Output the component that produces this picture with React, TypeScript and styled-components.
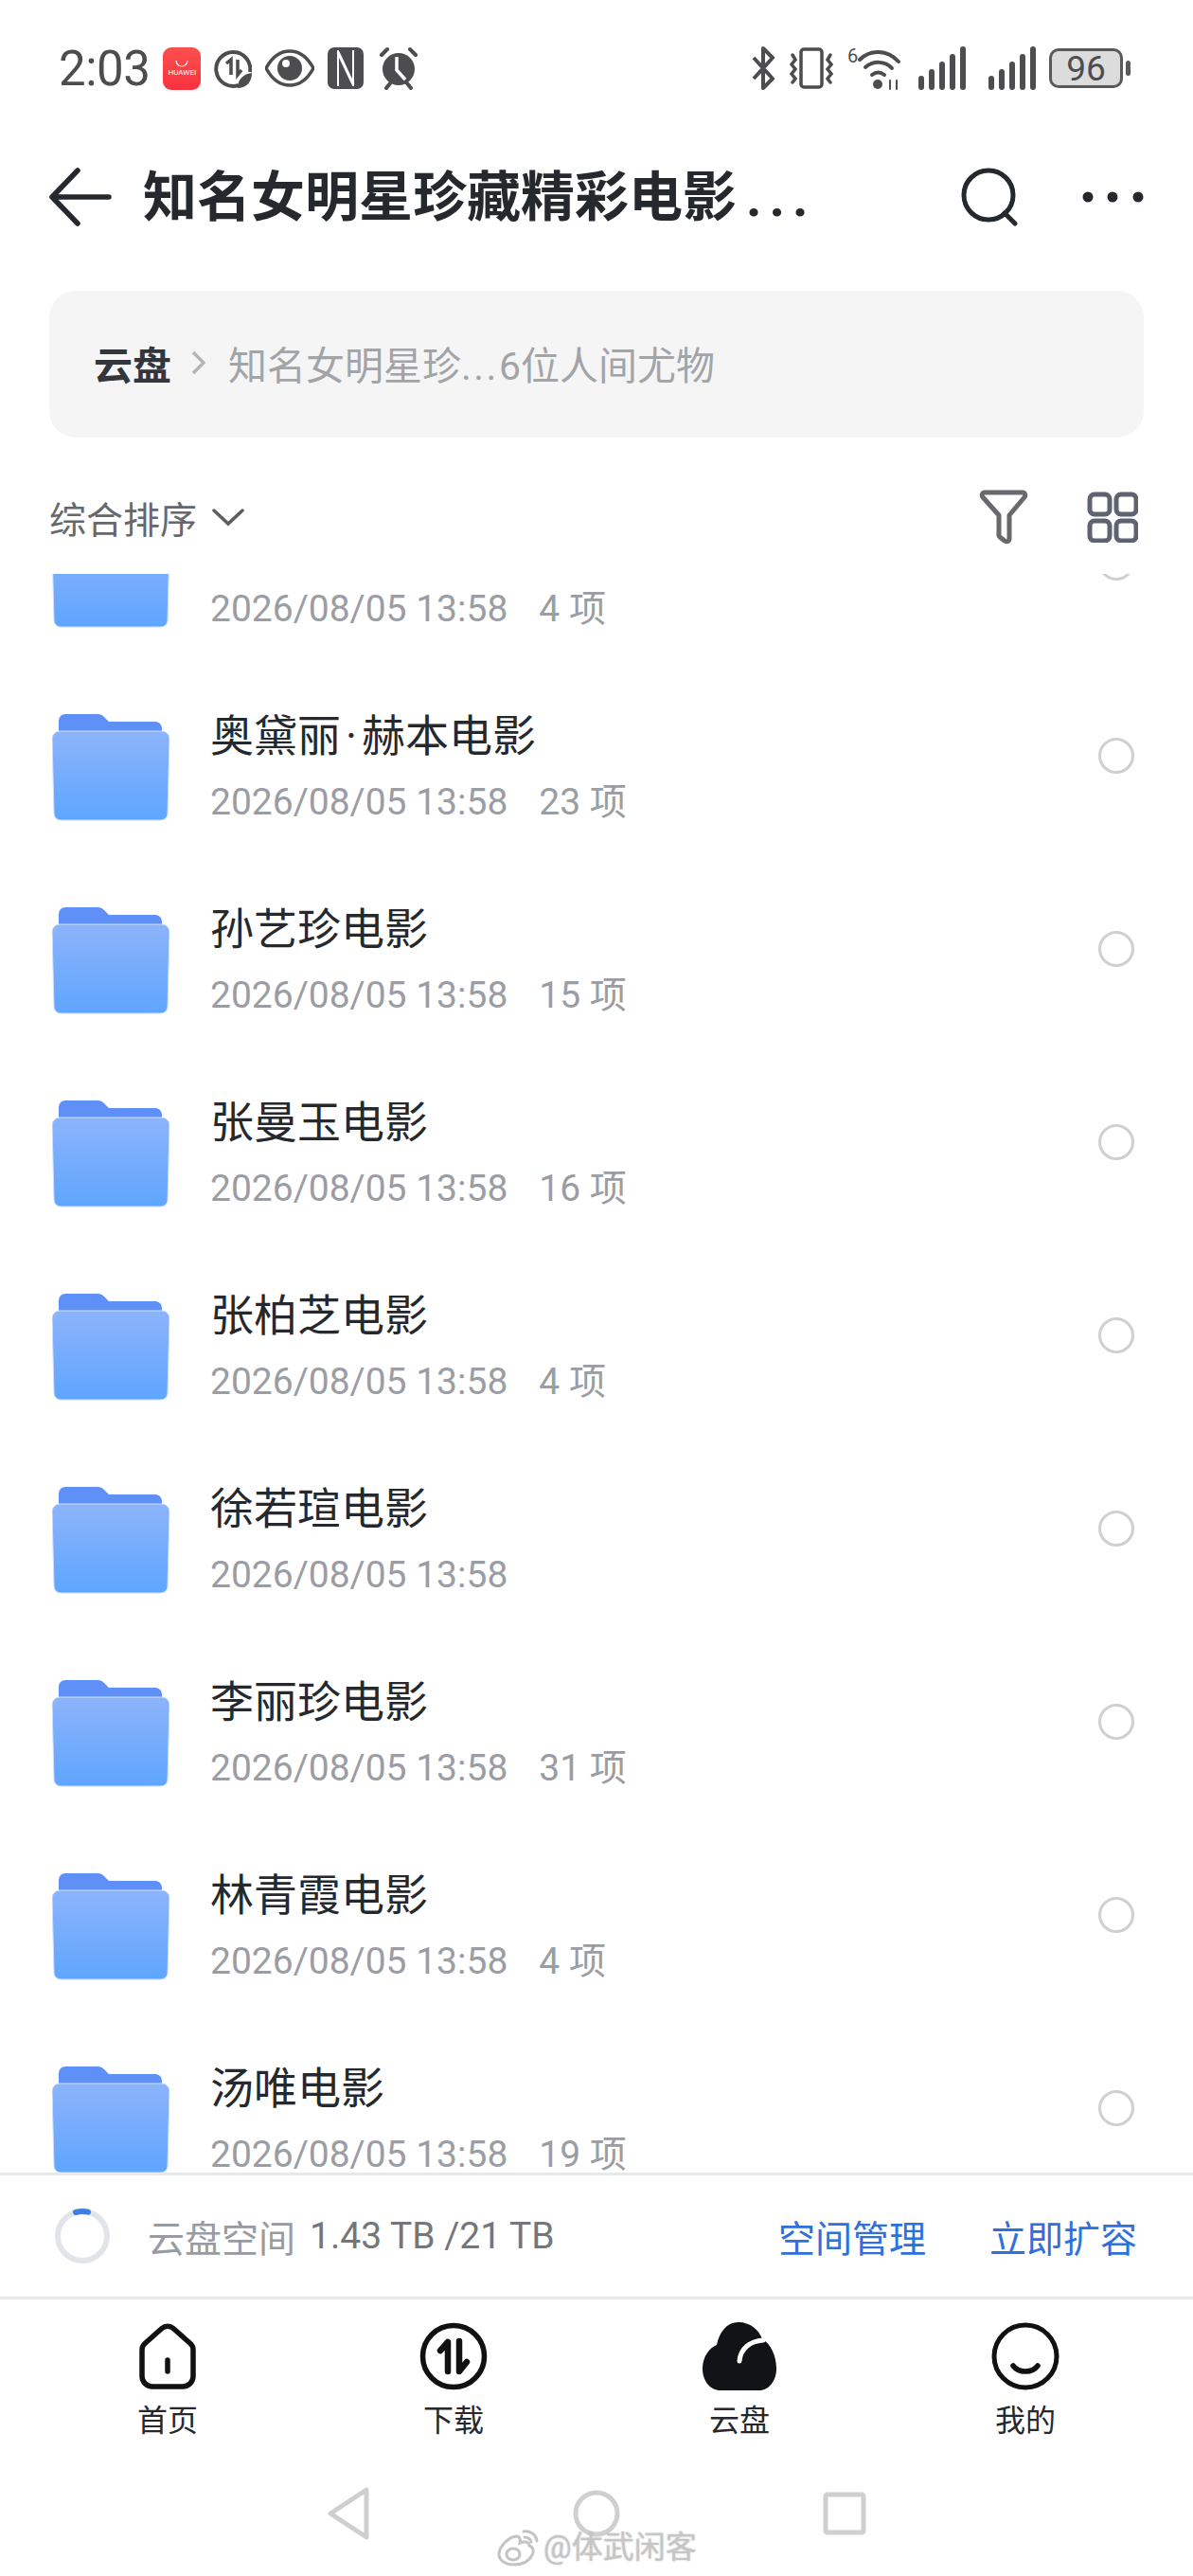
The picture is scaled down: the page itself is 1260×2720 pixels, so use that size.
import * as React from 'react';
import styled, { createGlobalStyle } from 'styled-components';

const GlobalStyle = createGlobalStyle`
  html, body {
    margin: 0;
    padding: 0;
    background: #fff;
  }
  * {
    box-sizing: border-box;
  }
`;

const Page = styled.div`
  position: relative;
  display: flex;
  flex-direction: column;
  width: 1260px;
  height: 2720px;
  overflow: hidden;
  background: #fff;
  font-family: Roboto, "Noto Sans CJK SC", sans-serif;
  color: #25282d;
`;

const StatusBar = styled.div`
  display: flex;
  align-items: center;
  justify-content: space-between;
  height: 144px;
  padding: 0 66px 0 62px;
  flex-shrink: 0;
  color: #4d4d4f;
`;

const StatusGroup = styled.div<{ $gap: number }>`
  display: flex;
  align-items: center;
  gap: ${(p) => p.$gap}px;
`;

const Clock = styled.span`
  font-size: 51px;
  line-height: 1;
  letter-spacing: -0.5px;
`;

const StoreTile = styled.div`
  display: flex;
  flex-direction: column;
  align-items: center;
  justify-content: center;
  width: 40px;
  height: 45px;
  border-radius: 9px;
  background: linear-gradient(#fb4f4f, #f9323e);
  color: #fff;
  font-size: 8px;
  line-height: 1;
`;

const BatteryBox = styled.div`
  display: flex;
  align-items: center;
  justify-content: center;
  width: 78px;
  height: 42px;
  border: 3px solid #5a5a5c;
  border-radius: 10px;
  background: #dcdcdc;
  font-size: 37px;
  line-height: 1;
  color: #4d4d4f;
`;

const BatteryNub = styled.div`
  width: 5px;
  height: 16px;
  margin-left: 3px;
  border-radius: 3px;
  background: #5a5a5c;
`;

const Battery = styled.div`
  display: flex;
  align-items: center;
`;

const Header = styled.div`
  display: flex;
  align-items: center;
  height: 128px;
  padding: 0 52px;
  flex-shrink: 0;
`;

const Title = styled.h1`
  flex: 1;
  margin: 2px 0 0 33px;
  font-size: 57px;
  line-height: 1.2;
  font-weight: 700;
  white-space: nowrap;
  color: #25282d;
`;

const TitleDots = styled.span`
  margin-left: 10px;
  letter-spacing: 8px;
`;

const HeaderActions = styled.div`
  display: flex;
  align-items: center;
  gap: 67px;
`;

const Crumbs = styled.div`
  display: flex;
  align-items: center;
  height: 155px;
  margin: 35px 52px 0;
  padding: 0 47px 4px;
  flex-shrink: 0;
  border-radius: 28px;
  background: #f5f5f5;
`;

const CrumbRoot = styled.span`
  font-weight: 700;
  font-size: 41px;
  color: #33363b;
`;

const CrumbCurrent = styled.span`
  color: #a2a4a8;
  font-size: 41px;
`;

const CrumbDots = styled.span`
  letter-spacing: 2.5px;
`;

const SortRow = styled.div`
  display: flex;
  align-items: center;
  justify-content: space-between;
  height: 144px;
  padding: 24px 52px 0;
  flex-shrink: 0;
`;

const SortLabel = styled.div`
  display: flex;
  align-items: center;
  gap: 16px;
  font-size: 39px;
  color: #66686c;
`;

const ViewTools = styled.div`
  display: flex;
  align-items: center;
  gap: 62px;
  margin-right: 6px;
`;

const List = styled.div`
  flex: 1;
  min-height: 0;
  overflow: hidden;
`;

const Scroller = styled.div`
  margin-top: -112px;
`;

const Row = styled.div`
  display: flex;
  align-items: center;
  height: 204px;
  padding: 0 62px 0 55px;
`;

const FolderIcon = styled.svg`
  margin-top: 20px;
`;

const RowText = styled.div`
  flex: 1;
  margin: 18px 0 0 43px;
`;

const RowName = styled.div`
  font-size: 46px;
  line-height: 60px;
  color: #25282d;
`;

const NameDot = styled.span`
  margin: 0 5px;
`;

const RowMeta = styled.div`
  display: flex;
  gap: 33px;
  margin-top: 16px;
  font-size: 39px;
  line-height: 48px;
  color: #9b9da4;
`;

const Radio = styled.div`
  width: 38px;
  height: 38px;
  margin-bottom: 5px;
  border: 3px solid #cfd0d4;
  border-radius: 50%;
`;

const Storage = styled.div`
  display: flex;
  align-items: center;
  height: 134px;
  padding: 0 59px 0 58px;
  flex-shrink: 0;
  border-top: 3px solid #e6e8ea;
  border-bottom: 3px solid #e6e8ea;
  font-size: 39px;
`;

const StorageLabel = styled.span`
  margin-left: 40px;
  color: #989ba1;
`;

const StorageValue = styled.span`
  flex: 1;
  margin-left: 15px;
  color: #74767a;
`;

const StorageLink = styled.span`
  margin-left: 67px;
  color: #2f70dc;
`;

const Tabs = styled.div`
  display: grid;
  grid-template-columns: repeat(4, 302px);
  height: 172px;
  padding: 24px 26px 0;
  flex-shrink: 0;
`;

const Tab = styled.div`
  display: flex;
  flex-direction: column;
  align-items: center;
  gap: 11px;
  font-size: 32px;
  line-height: 42px;
  color: #26282c;
`;

const NavBar = styled.div`
  display: flex;
  align-items: center;
  justify-content: center;
  gap: 214px;
  height: 120px;
  padding: 0 1px 12px 0;
  flex-shrink: 0;
`;

const Watermark = styled.div`
  position: absolute;
  left: 525px;
  top: 2666px;
  display: flex;
  align-items: center;
  gap: 5px;
  font-size: 33px;
  line-height: 48px;
  color: #c6c6c6;
  text-shadow: 0 0 2px rgba(120, 120, 120, 0.45);
`;

const Folder = () => (
  <FolderIcon width="124" height="114" viewBox="0 0 124 114">
    <defs>
      <linearGradient id="folderFront" x1="0" y1="0" x2="0" y2="1">
        <stop offset="0" stopColor="#8cb4fb" />
        <stop offset="1" stopColor="#5fa5ff" />
      </linearGradient>
    </defs>
    <path d="M7 19V8a7 7 0 0 1 7-7h34c3 0 5 1 7 3l5 5h49a7 7 0 0 1 7 7v3z" fill="#5e90f8" />
    <path d="M8 19h108a8 8 0 0 1 8 8l-2 79a7 7 0 0 1-7 7H9a7 7 0 0 1-7-7L0 27a8 8 0 0 1 8-8z" fill="url(#folderFront)" stroke="#cfe0ff" strokeWidth="1" />
  </FolderIcon>
);

const files = [
  { name: '', date: '2026/08/05 13:58', count: '4 项' },
  { name: '奥黛丽|赫本电影', date: '2026/08/05 13:58', count: '23 项' },
  { name: '孙艺珍电影', date: '2026/08/05 13:58', count: '15 项' },
  { name: '张曼玉电影', date: '2026/08/05 13:58', count: '16 项' },
  { name: '张柏芝电影', date: '2026/08/05 13:58', count: '4 项' },
  { name: '徐若瑄电影', date: '2026/08/05 13:58', count: '' },
  { name: '李丽珍电影', date: '2026/08/05 13:58', count: '31 项' },
  { name: '林青霞电影', date: '2026/08/05 13:58', count: '4 项' },
  { name: '汤唯电影', date: '2026/08/05 13:58', count: '19 项' },
];

const renderName = (name: string) => {
  if (!name) return '\u00a0';
  const parts = name.split('|');
  if (parts.length === 1) return name;
  return (
    <>
      {parts[0]}
      <NameDot>·</NameDot>
      {parts[1]}
    </>
  );
};

const tabs = [
  {
    label: '首页',
    icon: (
      <svg width="72" height="72" viewBox="0 0 72 72" fill="none" stroke="#111" strokeWidth="5.5">
        <path d="M30 6.500a9 9 0 0 1 12 0l18 16a9 9 0 0 1 3 7V57a11 11 0 0 1-11 11H20A11 11 0 0 1 9 57V29.500a9 9 0 0 1 3-7z" />
        <path d="M36 40v12" strokeLinecap="round" />
      </svg>
    ),
  },
  {
    label: '下载',
    icon: (
      <svg width="72" height="72" viewBox="0 0 72 72" fill="none" stroke="#111" strokeWidth="5.5">
        <circle cx="36" cy="36" r="32.500" />
        <path d="M22 30l8-9v31" strokeWidth="6.500" strokeLinecap="round" strokeLinejoin="round" />
        <path d="M42 20v32l8-10" strokeWidth="6.500" strokeLinecap="round" strokeLinejoin="round" />
      </svg>
    ),
  },
  {
    label: '云盘',
    icon: (
      <svg width="78" height="72" viewBox="0 0 78 72">
        <path d="M19 72C8 72 0 62 0 49 0 37 7 27 15 24 18 9 27 0 38 0c12 0 22 8 25 18 9 4 15 18 15 31 0 13-8 23-18 23z" fill="#121316" />
        <path d="M39 41c1-13 11-21 25-22" fill="none" stroke="#fff" strokeWidth="5" strokeLinecap="round" />
      </svg>
    ),
  },
  {
    label: '我的',
    icon: (
      <svg width="72" height="72" viewBox="0 0 72 72" fill="none" stroke="#111" strokeWidth="5">
        <circle cx="36" cy="36" r="33" />
        <path d="M23 46c6 8 20 8 26 0" strokeWidth="5.500" strokeLinecap="round" />
      </svg>
    ),
  },
];

const App = () => (
  <Page>
    <GlobalStyle />
    <StatusBar>
      <StatusGroup $gap={14}>
        <Clock>2:03</Clock>
        <StoreTile>
          <svg width="16" height="10" viewBox="0 0 16 10" fill="none" stroke="#fff" strokeWidth="1.200">
            <path d="M2 1c1 8 11 8 12 0" />
          </svg>
          <span>HUAWEI</span>
        </StoreTile>
        <svg width="40" height="46" viewBox="0 0 40 46" fill="none" stroke="#4d4d4f" strokeWidth="4">
          <path d="M26 41a18 18 0 1 1 12-14" />
          <path d="M13 18l5-4v16M25 14v16l4-5" strokeWidth="3.500" />
          <path d="M25 44c0-9 6-15 15-16 0 10-6 16-15 16z" fill="#4d4d4f" stroke="none" />
        </svg>
        <svg width="52" height="40" viewBox="0 0 52 40">
          <path d="M1 20C8 7 17 2 26 2s18 5 25 18c-7 13-16 18-25 18S8 33 1 20z" fill="none" stroke="#4d4d4f" strokeWidth="3.500" />
          <circle cx="26" cy="20" r="13" fill="#4d4d4f" />
          <circle cx="22" cy="15" r="4" fill="#fff" />
        </svg>
        <svg width="38" height="44" viewBox="0 0 38 44">
          <rect width="38" height="44" rx="7" fill="#4d4d4f" />
          <path d="M11 3v38M27 3v38" stroke="#fff" strokeWidth="2" />
          <path d="M11 5l16 34" stroke="#fff" strokeWidth="3" />
        </svg>
        <svg width="42" height="46" viewBox="0 0 42 46" style={{ marginLeft: 2 }}>
          <circle cx="21" cy="24" r="17" fill="#4d4d4f" />
          <path d="M19 11v14l9 10" fill="none" stroke="#fff" strokeWidth="3.500" />
          <path d="M3 9l6-6M39 9l-6-6M8 44l4-5M34 44l-4-5" stroke="#4d4d4f" strokeWidth="4" strokeLinecap="round" />
        </svg>
      </StatusGroup>
      <StatusGroup $gap={14}>
        <svg width="26" height="46" viewBox="0 0 26 46" fill="none" stroke="#4d4d4f" strokeWidth="4" strokeLinejoin="round">
          <path d="M3 12l20 22-10 10V2l10 10L3 34" />
        </svg>
        <svg width="48" height="44" viewBox="0 0 48 44" fill="none" stroke="#4d4d4f" strokeWidth="3.500">
          <rect x="13" y="2" width="22" height="40" rx="3" />
          <path d="M4 8l3 5-4 5 4 5-4 5 4 5-3 4M44 8l-3 5 4 5-4 5 4 5-4 5 3 4" strokeLinecap="round" />
        </svg>
        <svg width="56" height="46" viewBox="0 0 56 46" fill="none" stroke="#4d4d4f" strokeWidth="4" strokeLinecap="round" style={{ overflow: 'visible' }}>
          <text x="0" y="17" fontSize="20" fill="#4d4d4f" stroke="none">6</text>
          <path d="M13 14c11-11 29-11 41 2M19 22c8-7 21-7 28 1M26 30c4-3 9-3 13 0" />
          <circle cx="32" cy="40" r="5" fill="#4d4d4f" stroke="none" />
          <path d="M45 36v9M52 36v9" strokeWidth="2" />
        </svg>
        <svg width="50" height="46" viewBox="0 0 50 46" stroke="#4d4d4f" strokeWidth="6" strokeLinecap="round" style={{ marginLeft: 5 }}>
          <path d="M3 34v9M14 27v16M25 19v24M36 11v32M47 3v40" />
        </svg>
        <svg width="50" height="46" viewBox="0 0 50 46" stroke="#4d4d4f" strokeWidth="6" strokeLinecap="round" style={{ marginLeft: 10 }}>
          <path d="M3 34v9M14 27v16M25 19v24M36 11v32M47 3v40" />
        </svg>
        <Battery>
          <BatteryBox>96</BatteryBox>
          <BatteryNub />
        </Battery>
      </StatusGroup>
    </StatusBar>

    <Header>
      <svg width="66" height="62" viewBox="0 0 66 62" fill="none" stroke="#25282d" strokeWidth="5.500" strokeLinecap="round" strokeLinejoin="round">
        <path d="M30 3L3 31l27 28M3 31h60" />
      </svg>
      <Title>
        知名女明星珍藏精彩电影<TitleDots>...</TitleDots>
      </Title>
      <HeaderActions>
        <svg width="62" height="62" viewBox="0 0 62 62" fill="none" stroke="#25282d" strokeWidth="5" strokeLinecap="round">
          <circle cx="30" cy="29" r="26" />
          <path d="M47 48l11 11" />
        </svg>
        <svg width="65" height="14" viewBox="0 0 65 14" fill="#25282d">
          <circle cx="6" cy="7" r="5.500" />
          <circle cx="32" cy="7" r="5.500" />
          <circle cx="59" cy="7" r="5.500" />
        </svg>
      </HeaderActions>
    </Header>

    <Crumbs>
      <CrumbRoot>云盘</CrumbRoot>
      <svg width="18" height="28" viewBox="0 0 18 28" fill="none" stroke="#b4b5b9" strokeWidth="3.500" style={{ margin: '0 22px 0 20px' }}>
        <path d="M3 3l11 11L3 25" />
      </svg>
      <CrumbCurrent>
        知名女明星珍<CrumbDots>...</CrumbDots>6位人间尤物
      </CrumbCurrent>
    </Crumbs>

    <SortRow>
      <SortLabel>
        综合排序
        <svg width="34" height="20" viewBox="0 0 34 20" fill="none" stroke="#5c5e62" strokeWidth="3.500" strokeLinecap="round">
          <path d="M2 3l15 14L32 3" />
        </svg>
      </SortLabel>
      <ViewTools>
        <svg width="52" height="58" viewBox="0 0 52 58" fill="none" stroke="#68696d" strokeWidth="5" strokeLinejoin="round">
          <path d="M6 3h40a3 3 0 0 1 2 5L32 27v25a3 3 0 0 1-5 2l-5-4a3 3 0 0 1-1-3V27L4 8a3 3 0 0 1 2-5z" />
        </svg>
        <svg width="54" height="54" viewBox="0 0 54 54" fill="none" stroke="#5d6370" strokeWidth="5">
          <rect x="3" y="3" width="21" height="21" rx="5" />
          <rect x="31" y="3" width="21" height="21" rx="5" />
          <rect x="3" y="31" width="21" height="21" rx="5" />
          <rect x="31" y="31" width="21" height="21" rx="5" />
        </svg>
      </ViewTools>
    </SortRow>

    <List>
      <Scroller>
        {files.map((file) => (
          <Row key={file.name + file.count}>
            <Folder />
            <RowText>
              <RowName>{renderName(file.name)}</RowName>
              <RowMeta>
                <span>{file.date}</span>
                {file.count && <span>{file.count}</span>}
              </RowMeta>
            </RowText>
            <Radio />
          </Row>
        ))}
      </Scroller>
    </List>

    <Storage>
      <svg width="58" height="58" viewBox="0 0 58 58" fill="none" strokeWidth="6">
        <circle cx="29" cy="29" r="26" stroke="#e1e4e9" />
        <path d="M22 4a26 26 0 0 1 13-.300" stroke="#3f7fe6" strokeLinecap="round" />
      </svg>
      <StorageLabel>云盘空间</StorageLabel>
      <StorageValue>1.43 TB /21 TB</StorageValue>
      <StorageLink>空间管理</StorageLink>
      <StorageLink>立即扩容</StorageLink>
    </Storage>

    <Tabs>
      {tabs.map((tab) => (
        <Tab key={tab.label}>
          {tab.icon}
          {tab.label}
        </Tab>
      ))}
    </Tabs>

    <NavBar>
      <svg width="46" height="56" viewBox="0 0 46 56" fill="none" stroke="#cfcfcf" strokeWidth="5" strokeLinejoin="round">
        <path d="M42 3v50L4 28z" />
      </svg>
      <svg width="50" height="50" viewBox="0 0 50 50" fill="none" stroke="#cfcfcf" strokeWidth="5">
        <circle cx="25" cy="25" r="22" />
      </svg>
      <svg width="46" height="46" viewBox="0 0 46 46" fill="none" stroke="#cfcfcf" strokeWidth="5" strokeLinejoin="round">
        <rect x="3" y="3" width="40" height="40" rx="2" />
      </svg>
    </NavBar>

    <Watermark>
      <svg width="44" height="40" viewBox="0 0 44 40" fill="none" stroke="#c4c4c4" strokeWidth="3">
        <path d="M18 38C8 38 2 33 2 27c0-8 10-18 18-19 4 0 5 3 4 7 5-2 10-1 10 3 5 2 5 6 3 10-3 6-10 10-19 10z" />
        <ellipse cx="17" cy="27" rx="7" ry="6" />
        <path d="M28 3c7-1 13 3 14 10M29 9c3 0 7 2 7 5" strokeLinecap="round" />
      </svg>
      @体武闲客
    </Watermark>
  </Page>
);

export default App;
